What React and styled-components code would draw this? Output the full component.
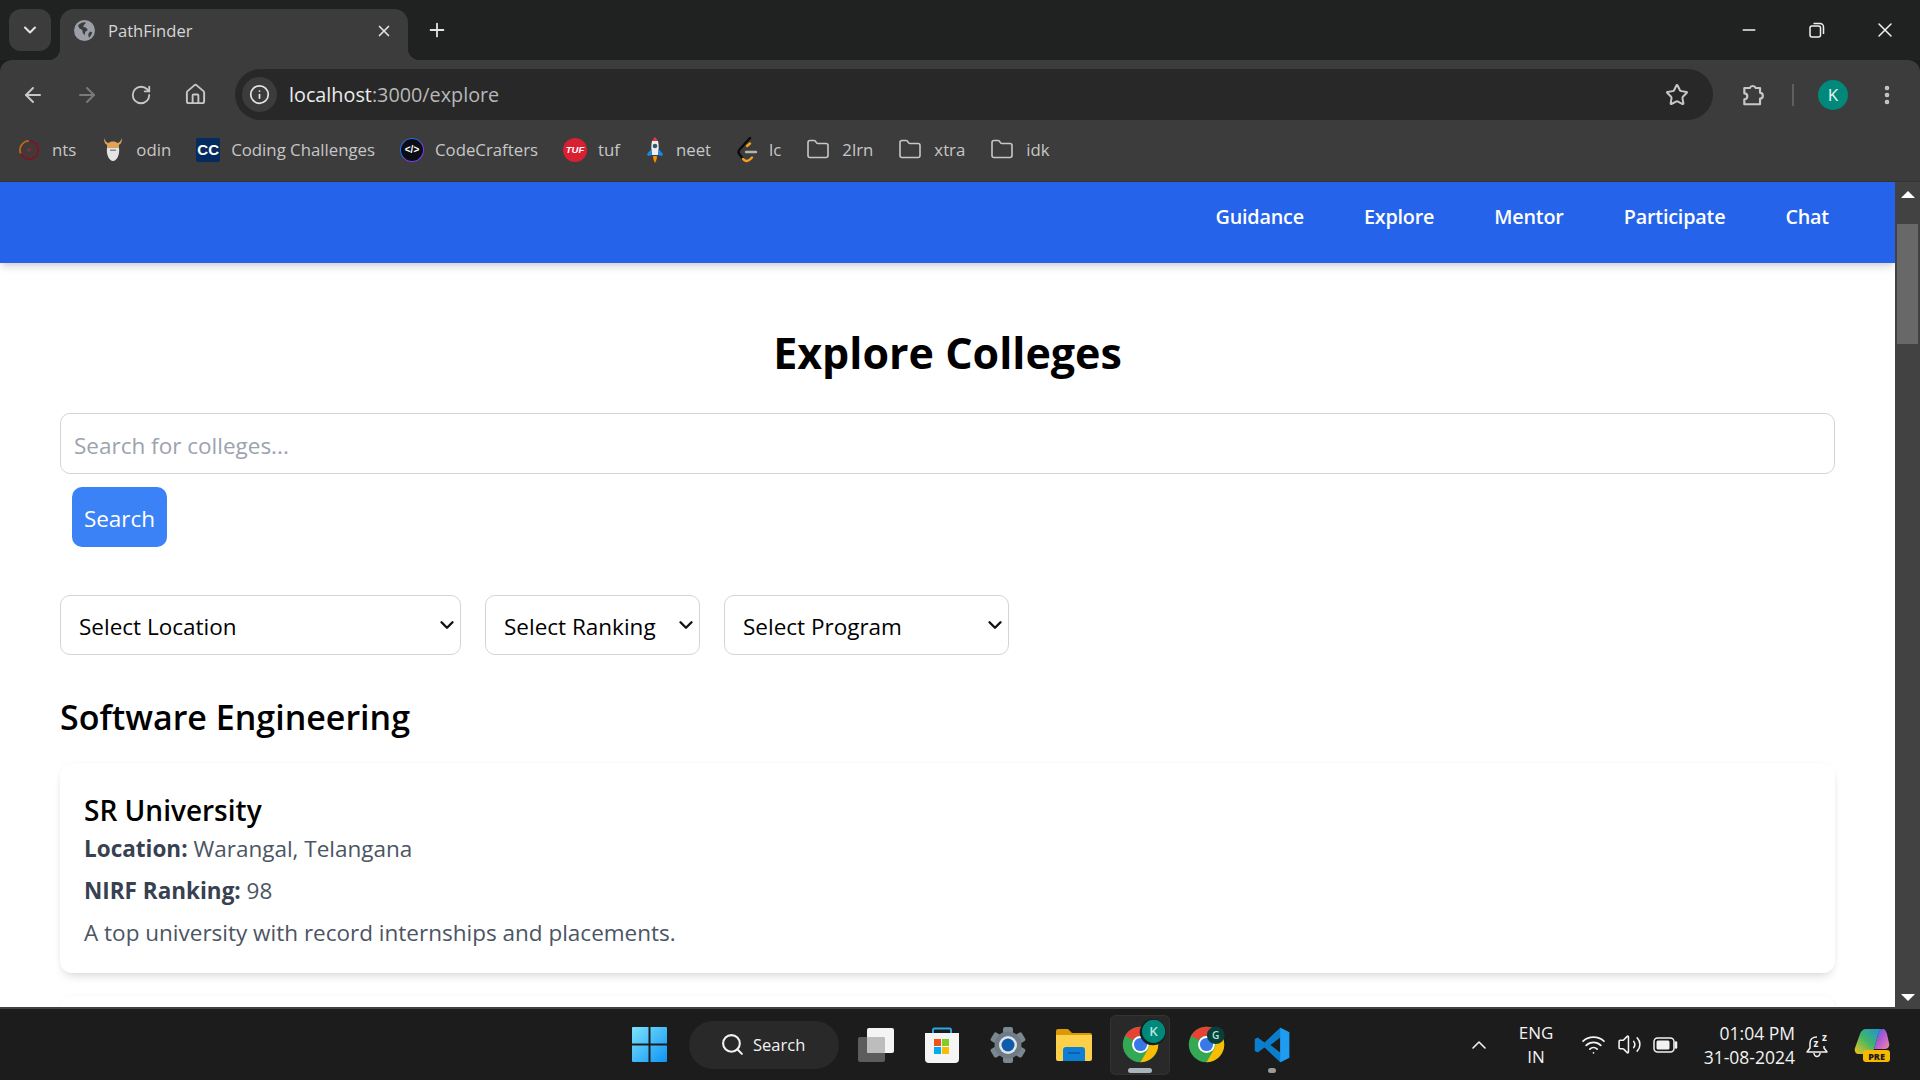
import React from "react";
import styled, { createGlobalStyle } from "styled-components";
import {
  ArrowLeft,
  ArrowRight,
  RotateCw,
  House,
  Info,
  Star,
  X,
  Plus,
  Minus,
  ChevronDown,
  ChevronUp,
  EllipsisVertical,
  Folder,
  Search,
  Wifi,
  Volume2,
} from "lucide-react";

const SANS = `"Open Sans", "Noto Sans", sans-serif`;

const GlobalStyle = createGlobalStyle`
  html, body {
    margin: 0;
    padding: 0;
    height: 100%;
    overflow: hidden;
    background: #1c1c1c;
    font-family: ${SANS};
  }
  * { box-sizing: border-box; }
`;

const Frame = styled.div`
  display: flex;
  flex-direction: column;
  height: 100vh;
  overflow: hidden;
`;

/* browser chrome */

const TabStrip = styled.div`
  display: flex;
  height: 60px;
  flex-shrink: 0;
  padding: 9px 1px 0 9px;
  background: #202221;
`;

const TabMenu = styled.div`
  display: flex;
  align-items: center;
  justify-content: center;
  width: 42px;
  height: 42px;
  border-radius: 12px;
  background: #3c3c3c;
  color: #e3e3e3;
`;

const Tab = styled.div`
  position: relative;
  display: flex;
  align-items: center;
  width: 348px;
  height: 51px;
  margin-left: 9px;
  padding: 0 15px 8px 14px;
  border-radius: 14px 14px 0 0;
  background: #3c3c3c;

  &::before,
  &::after {
    content: "";
    position: absolute;
    bottom: 0;
    width: 12px;
    height: 12px;
  }
  &::before {
    left: -12px;
    background: radial-gradient(circle at 0 0, transparent 12px, #3c3c3c 12.5px);
  }
  &::after {
    right: -12px;
    background: radial-gradient(circle at 100% 0, transparent 12px, #3c3c3c 12.5px);
  }
`;

const TabTitle = styled.span`
  flex: 1;
  margin-left: 13px;
  font-size: 16.6px;
  color: #d6d6d6;
`;

const TabClose = styled.div`
  display: flex;
  color: #e3e3e3;
`;

const NewTab = styled.div`
  display: flex;
  align-items: center;
  justify-content: center;
  width: 28px;
  height: 42px;
  margin-left: 15px;
  color: #e3e3e3;
`;

const WindowControls = styled.div`
  display: flex;
  margin-left: auto;
  height: 42px;
`;

const WindowButton = styled.div`
  display: flex;
  align-items: center;
  justify-content: center;
  width: 68px;
  color: #f0f0f0;
`;

const Toolbar = styled.div`
  display: flex;
  align-items: flex-start;
  height: 60px;
  flex-shrink: 0;
  padding: 9px 0 0 6px;
  border-radius: 12px 12px 0 0;
  background: #3c3c3c;
`;

const NavButton = styled.div`
  display: flex;
  align-items: center;
  justify-content: center;
  width: 54px;
  height: 51px;
  color: ${(p) => (p.$off ? "#7a7a7a" : "#c7c7c7")};
`;

const AddressBar = styled.div`
  display: flex;
  align-items: center;
  flex: 1;
  height: 51px;
  margin-left: 13px;
  padding: 0 24px 0 7px;
  border-radius: 26px;
  background: #282828;
`;

const InfoChip = styled.div`
  display: flex;
  align-items: center;
  justify-content: center;
  width: 35px;
  height: 35px;
  border-radius: 50%;
  background: #3c3c3c;
  color: #e3e3e3;
`;

const Url = styled.div`
  flex: 1;
  margin-left: 12px;
  font-size: 19.8px;
  color: #b8b8b8;

  b {
    font-weight: 400;
    color: #ececec;
  }
`;

const StarButton = styled.div`
  display: flex;
  color: #c7c7c7;
`;

const ToolbarEnd = styled.div`
  display: flex;
  align-items: center;
  width: 207px;
  height: 51px;
  padding-left: 14px;
  color: #c7c7c7;
`;

const ExtensionButton = styled.div`
  display: flex;
  justify-content: center;
  width: 52px;
`;

const ToolbarDivider = styled.div`
  width: 2px;
  height: 22px;
  margin-left: 13px;
  background: #5f5f5f;
`;

const Avatar = styled.div`
  display: flex;
  align-items: center;
  justify-content: center;
  width: 30px;
  height: 30px;
  margin-left: 24px;
  border-radius: 50%;
  background: #00897b;
  color: #e8f5f3;
  font-size: 17px;
`;

const MenuDots = styled.div`
  display: flex;
  justify-content: center;
  width: 24px;
  margin-left: 27px;
`;

const BookmarkBar = styled.div`
  display: flex;
  align-items: center;
  gap: 25px;
  height: 62px;
  flex-shrink: 0;
  padding: 0 0 2px 17px;
  border-bottom: 1px solid #333333;
  background: #3c3c3c;
`;

const Bookmark = styled.div`
  display: flex;
  align-items: center;
  gap: ${(p) => p.$gap || 11}px;
  font-size: 16.8px;
  color: #c7c7c7;
`;

const BookmarkIcon = styled.div`
  display: flex;
  align-items: center;
  justify-content: center;
  width: ${(p) => p.$width || 24}px;
  height: 24px;
`;

const CcBadge = styled.div`
  display: flex;
  align-items: center;
  justify-content: center;
  width: 24px;
  height: 24px;
  border-radius: 2px;
  background: #032b5e;
  color: #ffffff;
  font-family: "Liberation Sans", sans-serif;
  font-size: 15px;
  font-weight: 700;
`;

const TufBadge = styled.div`
  display: flex;
  align-items: center;
  justify-content: center;
  width: 24px;
  height: 24px;
  border-radius: 50%;
  background: #d91f32;
  color: #ffffff;
  font-family: "Liberation Sans", sans-serif;
  font-size: 9.5px;
  font-weight: 700;
  font-style: italic;
`;

const CodeBadge = styled.div`
  display: flex;
  align-items: center;
  justify-content: center;
  width: 24px;
  height: 24px;
  border: 1.5px solid #2f6bea;
  border-right-color: #7b3ff2;
  border-bottom-color: #7b3ff2;
  border-radius: 50%;
  background: #0b0d14;
  color: #ffffff;
  font-family: "Liberation Sans", sans-serif;
  font-size: 10px;
  font-weight: 700;
`;

/* page */

const Viewport = styled.div`
  display: flex;
  flex: 1;
  min-height: 0;
  background: #424242;
`;

const Page = styled.div`
  flex: 1;
  min-width: 0;
  margin-bottom: 2px;
  overflow: hidden;
  background: #ffffff;
`;

const Nav = styled.nav`
  position: relative;
  z-index: 1;
  display: flex;
  justify-content: flex-end;
  gap: 60px;
  height: 81px;
  padding: 21px 66px 0 0;
  background: #2563eb;
  box-shadow: 0 5px 8px -1px rgba(0, 0, 0, 0.14), 0 2px 4px -2px rgba(0, 0, 0, 0.1);
`;

const NavLink = styled.a`
  font-size: 19.8px;
  font-weight: 600;
  line-height: 28px;
  letter-spacing: -0.2px;
  color: #ffffff;
`;

const Main = styled.main`
  padding: 0 60px;
`;

const Title = styled.h1`
  margin: 63px 0 33px;
  font-size: 43px;
  font-weight: 700;
  line-height: 54px;
  text-align: center;
  color: #000000;
`;

const SearchInput = styled.input`
  display: block;
  width: 100%;
  height: 61px;
  padding: 4px 13px 0;
  border: 1.5px solid #d1d5db;
  border-radius: 10px;
  outline: none;
  font-family: ${SANS};
  font-size: 22.5px;
  color: #111827;

  &::placeholder {
    color: #9ca3af;
  }
`;

const SearchButton = styled.button`
  display: block;
  width: 95px;
  height: 60px;
  margin: 13px 0 0 12px;
  padding: 2px 0 0;
  border: none;
  border-radius: 10px;
  background: #3b82f6;
  color: #ffffff;
  font-family: ${SANS};
  font-size: 22.5px;
`;

const Filters = styled.div`
  display: flex;
  gap: 24px;
  margin-top: 48px;
`;

const SelectWrap = styled.div`
  position: relative;
  width: ${(p) => p.$width}px;
  height: 60px;
`;

const FilterSelect = styled.select`
  appearance: none;
  width: 100%;
  height: 100%;
  padding: 2px 0 0 18px;
  border: 1.5px solid #d1d5db;
  border-radius: 10px;
  background: #ffffff;
  outline: none;
  font-family: ${SANS};
  font-size: 22.5px;
  color: #000000;
`;

const SelectArrow = styled.div`
  position: absolute;
  top: 19px;
  right: 3px;
  display: flex;
  color: #111111;
  pointer-events: none;
`;

const SectionTitle = styled.h2`
  margin: 40px 0 24px;
  font-size: 34px;
  font-weight: 600;
  line-height: 44px;
  color: #000000;
`;

const Card = styled.article`
  height: 210px;
  margin-bottom: 23px;
  padding: 30px 24px 0;
  border-radius: 12px;
  background: #ffffff;
  box-shadow: 0 6px 10px -3px rgba(0, 0, 0, 0.14), 0 0 4px rgba(0, 0, 0, 0.03);
`;

const CardTitle = styled.h3`
  margin: 0;
  font-size: 28px;
  font-weight: 600;
  line-height: 34px;
  color: #000000;
`;

const CardLine = styled.p`
  margin: ${(p) => (p.$first ? "7px" : "12px")} 0 0;
  font-size: 22.5px;
  line-height: 30px;
  color: #4b5563;

  strong {
    font-weight: 700;
    color: #374151;
  }
`;

const Scrollbar = styled.div`
  display: flex;
  flex-direction: column;
  align-items: center;
  width: 25px;
  flex-shrink: 0;
`;

const ScrollArrow = styled.div`
  width: 0;
  height: 0;
  margin-top: ${(p) => (p.$down ? "auto" : "9px")};
  margin-bottom: ${(p) => (p.$down ? "8px" : "0")};
  border-left: 7px solid transparent;
  border-right: 7px solid transparent;
  border-bottom: ${(p) => (p.$down ? "0" : "7px solid #ffffff")};
  border-top: ${(p) => (p.$down ? "7px solid #ffffff" : "0")};
`;

const ScrollThumb = styled.div`
  width: 21px;
  height: 120px;
  margin-top: 26px;
  background: #686868;
`;

/* taskbar */

const Taskbar = styled.footer`
  display: flex;
  align-items: center;
  height: 71px;
  flex-shrink: 0;
  padding-left: 616px;
  background: #1c1c1c;
`;

const TaskSlot = styled.div`
  position: relative;
  display: flex;
  align-items: center;
  justify-content: center;
  width: 66px;
  height: 60px;
  border-radius: 6px;
`;

const ActiveSlot = styled(TaskSlot)`
  margin: 0 3px;
  width: 60px;
  background: #292929;
  box-shadow: inset 0 0 0 1px #323232;
`;

const Indicator = styled.div`
  position: absolute;
  bottom: 2px;
  left: 50%;
  width: ${(p) => p.$width}px;
  height: 5px;
  border-radius: 3px;
  background: ${(p) => p.$color};
  transform: translateX(-50%);
`;

const TaskSearch = styled.div`
  display: flex;
  align-items: center;
  gap: 8px;
  width: 150px;
  height: 48px;
  margin: 0 4px 0 7px;
  padding-left: 31px;
  border-radius: 24px;
  background: #292929;
  color: #f2f2f2;
  font-size: 16.5px;
`;

const Tray = styled.div`
  display: flex;
  align-items: center;
  margin-left: auto;
  color: #f2f2f2;
`;

const TrayIcon = styled.div`
  display: flex;
  align-items: center;
  justify-content: center;
  width: ${(p) => p.$width || 36}px;
`;

const TrayLang = styled.div`
  width: 60px;
  margin: 0 9px 0 14px;
  font-size: 17px;
  line-height: 24px;
  text-align: center;
`;

const Clock = styled.div`
  width: 110px;
  margin: 0 6px 0 2px;
  font-size: 17.5px;
  line-height: 24px;
  text-align: right;
`;

const CopilotWrap = styled.div`
  display: flex;
  width: 36px;
  margin: 0 30px 0 19px;
`;

/* drawings */

const Globe = () => (
  <svg width="21" height="21" viewBox="0 0 24 24">
    <circle cx="12" cy="12" r="12" fill="#9aa0a6" />
    <path
      d="M12 2.5c-3 .2-5.6 1.5-7.4 3.6L6 9.5l3.5 2 .6 3.4 2 2.6.8-4 3-2-2.5-3-3-.8 1.2-2.4L13.8 3zM20.8 14l-2.6-.8-2 3 .8 4c1.8-1.4 3.2-3.6 3.8-6.2z"
      fill="#3c3c3c"
    />
  </svg>
);

const RestoreIcon = () => (
  <svg width="18" height="18" viewBox="0 0 18 18" fill="none" stroke="currentColor" strokeWidth="1.5">
    <rect x="2" y="5" width="10.5" height="11" rx="2" />
    <path d="M5.5 2.5H12A3.5 3.5 0 0 1 15.5 6v7" />
  </svg>
);

const ExtensionIcon = () => (
  <svg width="26" height="26" viewBox="0 0 24 24" fill="none" stroke="currentColor" strokeWidth="2" strokeLinejoin="round">
    <path d="M4 5.5h5a3 3 0 0 1 5.5 0h4V10a2.6 2.6 0 0 1 0 5.2v5.300H4V16a2.700 2.700 0 0 0 0-5.500z" />
  </svg>
);

const NtsIcon = () => (
  <svg width="22" height="24" viewBox="0 0 24 24" fill="none">
    <path d="M12 2a10 10 0 0 0-9 14" stroke="#b4691f" strokeWidth="2" />
    <path d="M3 16a10 10 0 1 0 9-14" stroke="#7c1426" strokeWidth="2" />
    <circle cx="12" cy="12" r="6.5" stroke="#6d2a25" strokeWidth="1.5" strokeDasharray="2 1.5" />
    <circle cx="12" cy="12" r="2" fill="#8c2b2b" />
  </svg>
);

const OdinIcon = () => (
  <svg width="18" height="24" viewBox="0 0 18 24">
    <path d="M0 0c0 5 2 7 4 7l1-2C3 5 1 3 0 0zM18 0c0 5-2 7-4 7l-1-2c2 0 4-2 5-5z" fill="#e0a458" />
    <path d="M3 8c0-3 3-4.5 6-4.5S15 5 15 8v2H3z" fill="#e0a458" />
    <path d="M3 10h12c1 6-2 13-6 13S2 16 3 10z" fill="#e4e4e4" />
    <path d="M6 11.5h6V13H6z" fill="#8a8a8a" />
  </svg>
);

const RocketIcon = () => (
  <svg width="16" height="26" viewBox="0 0 16 26">
    <path d="M8 0C6.5 1.2 5.7 2.5 5.3 4h5.4C10.3 2.5 9.5 1.2 8 0z" fill="#e53935" />
    <path d="M5 4h6c1 4 .8 10 0 14H5C4.2 14 4 8 5 4z" fill="#eceff1" />
    <circle cx="8" cy="9" r="2.3" fill="#37596b" />
    <path d="M4.5 12 0 17l1 2 4-1zM11.5 12l4.5 5-1 2-4-1z" fill="#1e88e5" />
    <path d="M6 19h4c0 3-1 5-2 7-1-2-2-4-2-7z" fill="#fb8c00" />
  </svg>
);

const LeetcodeIcon = () => (
  <svg width="21" height="26" viewBox="0 0 21 26" fill="none" strokeWidth="2.4" strokeLinecap="round">
    <path d="M13 1 3 12c-2 2-2 4 0 6l3 4" stroke="#0b0b0b" />
    <path d="M13 6.5 10 9" stroke="#f89f1b" />
    <path d="M6 22c2 2.5 5 2.5 7 .5l2-2" stroke="#f89f1b" />
    <path d="M9 15h10" stroke="#b3b3b3" />
  </svg>
);

const WindowsLogo = () => (
  <svg width="35" height="35" viewBox="0 0 35 35">
    <defs>
      <linearGradient id="winGrad" x1="0" y1="0" x2="1" y2="1">
        <stop offset="0" stopColor="#7be3fb" />
        <stop offset="1" stopColor="#0f93f5" />
      </linearGradient>
    </defs>
    <path
      d="M1 0h15.5v16.5H0V1a1 1 0 0 1 1-1zM18.5 0H34a1 1 0 0 1 1 1v15.5H18.5zM0 18.5h16.5V35H1a1 1 0 0 1-1-1zM18.5 18.5H35V34a1 1 0 0 1-1 1H18.5z"
      fill="url(#winGrad)"
    />
  </svg>
);

const TaskViewIcon = () => (
  <svg width="36" height="34" viewBox="0 0 36 34">
    <rect x="0" y="9" width="27" height="25" rx="2" fill="#5c5c5c" />
    <rect x="9" y="0" width="27" height="25" rx="2" fill="#f4f4f4" />
    <rect x="9" y="9" width="18" height="16" rx="1" fill="#bdbdbd" />
  </svg>
);

const StoreIcon = () => (
  <svg width="36" height="36" viewBox="0 0 36 36">
    <path d="M9 8V3a1.5 1.5 0 0 1 1.5-1.5h15A1.5 1.5 0 0 1 27 3v5" fill="none" stroke="#2ba6e8" strokeWidth="2" />
    <path d="M1 6h34v26a4 4 0 0 1-4 4H5a4 4 0 0 1-4-4z" fill="#f5f5f5" />
    <rect x="10" y="12" width="7" height="7" fill="#f1511b" />
    <rect x="18" y="12" width="7" height="7" fill="#80cc28" />
    <rect x="10" y="20" width="7" height="7" fill="#00adef" />
    <rect x="18" y="20" width="7" height="7" fill="#fbbc09" />
  </svg>
);

const SettingsIcon = () => (
  <svg width="36" height="36" viewBox="0 0 36 36">
    {[0, 60, 120, 180, 240, 300].map((a) => (
      <rect key={a} x="13" y="0" width="10" height="10" rx="2" fill="#7b8791" transform={`rotate(${a} 18 18)`} />
    ))}
    <circle cx="18" cy="18" r="13.5" fill="#6f7b85" />
    <circle cx="18" cy="18" r="9" fill="#dfe5ea" />
    <circle cx="18" cy="18" r="6.5" fill="#0f5cad" />
  </svg>
);

const ExplorerIcon = () => (
  <svg width="36" height="32" viewBox="0 0 36 32">
    <path d="M0 2a2 2 0 0 1 2-2h10l4 4h18a2 2 0 0 1 2 2v6H0z" fill="#d99a06" />
    <path d="M0 6h36v24a2 2 0 0 1-2 2H2a2 2 0 0 1-2-2z" fill="#fdd04b" />
    <path d="M7 21a3 3 0 0 1 3-3h16a3 3 0 0 1 3 3v11H7z" fill="#0f7fd6" />
    <path d="M12 24h12" stroke="#0a5aa6" strokeWidth="1.5" />
  </svg>
);

const ChromeIcon = ({ badge, color, cx, cy, r, ring }) => (
  <svg width="37" height="37" viewBox="0 0 48 48" style={{ overflow: "visible" }}>
    <circle cx="24" cy="24" r="23" fill="#34a853" />
    <path d="M4.1 12.5A23 23 0 0 1 43.9 12.5H24A11.5 11.5 0 0 0 14 18.2z" fill="#e94235" />
    <path d="M43.9 12.5A23 23 0 0 1 24 47L34 29.8A11.5 11.5 0 0 0 24 12.5z" fill="#fbbc04" />
    <circle cx="24" cy="24" r="11" fill="#ffffff" />
    <circle cx="24" cy="24" r="8.5" fill="#3b78e7" />
    {ring && <circle cx={cx - 1} cy={cy + 1} r={r + 2} fill="#10211f" />}
    <circle cx={cx} cy={cy} r={r} fill={color} />
    <text
      x={cx}
      y={cy + r * 0.42}
      textAnchor="middle"
      fontFamily="Open Sans, sans-serif"
      fontSize={r * 1.15}
      fontWeight="600"
      fill="#b9e3dc"
    >
      {badge}
    </text>
  </svg>
);

const VscodeIcon = () => (
  <svg width="36" height="36" viewBox="0 0 24 24">
    <path
      fillRule="evenodd"
      d="M17.5 .5 23.5 3.5V20.5L17.5 23.5 7 13.7 2.5 17 .5 16V8L2.5 7 7 10.3zM17.5 7 11 12l6.5 5z"
      fill="#0a7ecb"
    />
    <path d="M17.5 .5 23.5 3.5V20.5L17.5 23.5z" fill="#1f9cf0" />
  </svg>
);

const BatteryIcon = () => (
  <svg width="25" height="16" viewBox="0 0 25 16" fill="none">
    <rect x="1" y="1" width="20" height="14" rx="3.5" stroke="#f2f2f2" strokeWidth="1.5" />
    <rect x="3.5" y="3.5" width="13" height="9" rx="1.5" fill="#f2f2f2" />
    <path d="M23 5.5v5" stroke="#f2f2f2" strokeWidth="2.5" strokeLinecap="round" />
  </svg>
);

const BellZzzIcon = () => (
  <svg width="26" height="28" viewBox="0 0 26 28" fill="none" stroke="#f2f2f2" strokeWidth="1.5">
    <path d="M12 6C7 6 5 9 5 12v5l-3 4h20l-3-4v-2" strokeLinejoin="round" />
    <path d="M9 22c0 2 1.5 3.5 3 3.5s3-1.5 3-3.5" />
    <text x="8.5" y="16" fontFamily="Open Sans, sans-serif" fontSize="10" fontWeight="700" fill="#f2f2f2" stroke="none">
      z
    </text>
    <text x="17" y="10" fontFamily="Open Sans, sans-serif" fontSize="10" fontWeight="700" fill="#f2f2f2" stroke="none">
      z
    </text>
  </svg>
);

const CopilotIcon = () => (
  <svg width="36" height="36" viewBox="0 0 36 36">
    <defs>
      <linearGradient id="coLeft" x1="0" y1="1" x2="1" y2="0">
        <stop offset="0" stopColor="#f5c518" />
        <stop offset="0.5" stopColor="#3fb56b" />
        <stop offset="1" stopColor="#1c8fe3" />
      </linearGradient>
      <linearGradient id="coRight" x1="0" y1="0" x2="1" y2="1">
        <stop offset="0" stopColor="#2b6fe0" />
        <stop offset="0.5" stopColor="#b45ad1" />
        <stop offset="1" stopColor="#f08aa0" />
      </linearGradient>
    </defs>
    <path d="M12 2h16c-2 1-3 3-4 6l-4 14c-1 3-3 5-6 5H4c-2 0-4-3-3-6l5-14c1-3 3-5 6-5z" fill="url(#coLeft)" />
    <path d="M24 8c1-3 2-6 5-6 2 0 3 2 4 5l2 9c1 3-1 6-4 6H20z" fill="url(#coRight)" />
    <rect x="9" y="23" width="27" height="12" rx="3" fill="#f7b900" />
    <text x="22.5" y="32.5" textAnchor="middle" fontFamily="Open Sans, sans-serif" fontSize="9" fontWeight="800" fill="#1c1c1c">
      PRE
    </text>
  </svg>
);

const bookmarks = [
  { label: "nts", icon: <NtsIcon /> },
  { label: "odin", icon: <OdinIcon /> },
  { label: "Coding Challenges", icon: <CcBadge>CC</CcBadge> },
  { label: "CodeCrafters", icon: <CodeBadge>&lt;/&gt;</CodeBadge> },
  { label: "tuf", icon: <TufBadge>TUF</TufBadge> },
  { label: "neet", icon: <RocketIcon />, width: 20 },
  { label: "lc", icon: <LeetcodeIcon />, width: 22 },
  { label: "2lrn", icon: <Folder size={25} strokeWidth={1.6} />, gap: 12 },
  { label: "xtra", icon: <Folder size={25} strokeWidth={1.6} />, gap: 12 },
  { label: "idk", icon: <Folder size={25} strokeWidth={1.6} />, gap: 12 },
];

const navLinks = ["Guidance", "Explore", "Mentor", "Participate", "Chat"];

const filters = [
  { label: "Select Location", width: 401 },
  { label: "Select Ranking", width: 215 },
  { label: "Select Program", width: 285 },
];

export default function App() {
  return (
    <Frame>
      <GlobalStyle />

      <TabStrip>
        <TabMenu>
          <ChevronDown size={20} strokeWidth={2.5} />
        </TabMenu>
        <Tab>
          <Globe />
          <TabTitle>PathFinder</TabTitle>
          <TabClose>
            <X size={18} strokeWidth={2.2} />
          </TabClose>
        </Tab>
        <NewTab>
          <Plus size={22} strokeWidth={2} />
        </NewTab>
        <WindowControls>
          <WindowButton>
            <Minus size={20} strokeWidth={1.6} />
          </WindowButton>
          <WindowButton>
            <RestoreIcon />
          </WindowButton>
          <WindowButton>
            <X size={24} strokeWidth={1.5} />
          </WindowButton>
        </WindowControls>
      </TabStrip>

      <Toolbar>
        <NavButton>
          <ArrowLeft size={24} strokeWidth={2} />
        </NavButton>
        <NavButton $off>
          <ArrowRight size={24} strokeWidth={2} />
        </NavButton>
        <NavButton>
          <RotateCw size={22} strokeWidth={2} />
        </NavButton>
        <NavButton>
          <House size={23} strokeWidth={2} />
        </NavButton>
        <AddressBar>
          <InfoChip>
            <Info size={21} strokeWidth={2} />
          </InfoChip>
          <Url>
            <b>localhost</b>:3000/explore
          </Url>
          <StarButton>
            <Star size={24} strokeWidth={2} />
          </StarButton>
        </AddressBar>
        <ToolbarEnd>
          <ExtensionButton>
            <ExtensionIcon />
          </ExtensionButton>
          <ToolbarDivider />
          <Avatar>K</Avatar>
          <MenuDots>
            <EllipsisVertical size={24} strokeWidth={2.6} />
          </MenuDots>
        </ToolbarEnd>
      </Toolbar>

      <BookmarkBar>
        {bookmarks.map((b) => (
          <Bookmark key={b.label} $gap={b.gap}>
            <BookmarkIcon $width={b.width}>{b.icon}</BookmarkIcon>
            {b.label}
          </Bookmark>
        ))}
      </BookmarkBar>

      <Viewport>
        <Page>
          <Nav>
            {navLinks.map((l) => (
              <NavLink key={l}>{l}</NavLink>
            ))}
          </Nav>
          <Main>
            <Title>Explore Colleges</Title>
            <SearchInput placeholder="Search for colleges..." />
            <SearchButton>Search</SearchButton>
            <Filters>
              {filters.map((f) => (
                <SelectWrap key={f.label} $width={f.width}>
                  <FilterSelect>
                    <option>{f.label}</option>
                  </FilterSelect>
                  <SelectArrow>
                    <ChevronDown size={22} strokeWidth={2.6} />
                  </SelectArrow>
                </SelectWrap>
              ))}
            </Filters>
            <SectionTitle>Software Engineering</SectionTitle>
            <Card>
              <CardTitle>SR University</CardTitle>
              <CardLine $first>
                <strong>Location:</strong> Warangal, Telangana
              </CardLine>
              <CardLine>
                <strong>NIRF Ranking:</strong> 98
              </CardLine>
              <CardLine>A top university with record internships and placements.</CardLine>
            </Card>
            <Card />
          </Main>
        </Page>
        <Scrollbar>
          <ScrollArrow />
          <ScrollThumb />
          <ScrollArrow $down />
        </Scrollbar>
      </Viewport>

      <Taskbar>
        <TaskSlot>
          <WindowsLogo />
        </TaskSlot>
        <TaskSearch>
          <Search size={25} strokeWidth={2} />
          Search
        </TaskSearch>
        <TaskSlot>
          <TaskViewIcon />
        </TaskSlot>
        <TaskSlot>
          <StoreIcon />
        </TaskSlot>
        <TaskSlot>
          <SettingsIcon />
        </TaskSlot>
        <TaskSlot>
          <ExplorerIcon />
        </TaskSlot>
        <ActiveSlot>
          <ChromeIcon badge="K" color="#00897b" cx={41} cy={7} r={15} ring />
          <Indicator $width={24} $color="#aab4bd" />
        </ActiveSlot>
        <TaskSlot>
          <ChromeIcon badge="G" color="#07403a" cx={36} cy={12} r={11.5} />
        </TaskSlot>
        <TaskSlot>
          <VscodeIcon />
          <Indicator $width={8} $color="#9a9a9a" />
        </TaskSlot>
        <Tray>
          <TrayIcon $width={26}>
            <ChevronUp size={24} strokeWidth={1.6} />
          </TrayIcon>
          <TrayLang>
            ENG
            <br />
            IN
          </TrayLang>
          <TrayIcon>
            <Wifi size={25} strokeWidth={1.7} />
          </TrayIcon>
          <TrayIcon>
            <Volume2 size={25} strokeWidth={1.5} />
          </TrayIcon>
          <TrayIcon>
            <BatteryIcon />
          </TrayIcon>
          <Clock>
            01:04 PM
            <br />
            31-08-2024
          </Clock>
          <TrayIcon $width={34}>
            <BellZzzIcon />
          </TrayIcon>
          <CopilotWrap>
            <CopilotIcon />
          </CopilotWrap>
        </Tray>
      </Taskbar>
    </Frame>
  );
}
